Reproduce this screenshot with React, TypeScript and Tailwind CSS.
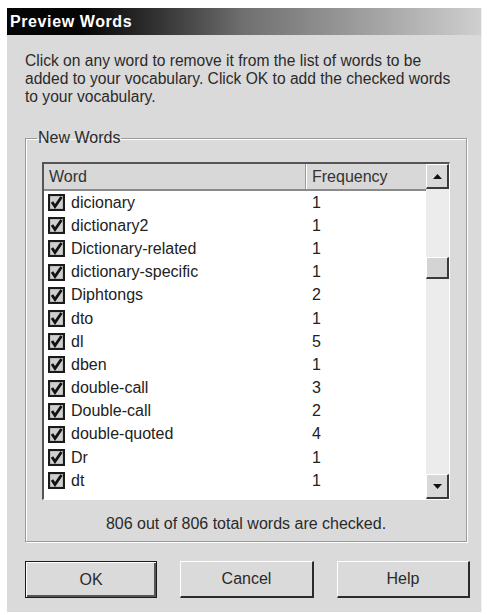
import React from "react";

const words: [string, number][] = [
  ["dicionary", 1],
  ["dictionary2", 1],
  ["Dictionary-related", 1],
  ["dictionary-specific", 1],
  ["Diphtongs", 2],
  ["dto", 1],
  ["dl", 5],
  ["dben", 1],
  ["double-call", 3],
  ["Double-call", 2],
  ["double-quoted", 4],
  ["Dr", 1],
  ["dt", 1],
];

function CheckBox() {
  return (
    <svg width="17" height="17" viewBox="0 0 17 17" className="shrink-0">
      <rect x="1" y="1" width="15" height="15" fill="#cfcfcf" stroke="#1a1a1a" strokeWidth="2.2" />
      <polyline points="4,8 7,12.5 13.5,3" fill="none" stroke="#111" strokeWidth="2.8" />
    </svg>
  );
}

function ArrowButton({ dir }: { dir: "up" | "down" }) {
  return (
    <div className="h-[25px] w-full bg-[#d8d8d8] border-t border-l border-t-white border-l-white border-b-2 border-r-2 border-b-[#3a3a3a] border-r-[#3a3a3a] flex items-center justify-center">
      <svg width="9" height="5" viewBox="0 0 9 5">
        {dir === "up" ? <polygon points="0,5 9,5 4.5,0" fill="#111" /> : <polygon points="0,0 9,0 4.5,5" fill="#111" />}
      </svg>
    </div>
  );
}

function DialogButton({ label, isDefault }: { label: string; isDefault?: boolean }) {
  return (
    <button
      className={`h-[37px] bg-[#dadada] text-[16px] text-[#2a2a2a] ${
        isDefault
          ? "border border-[#1a1a1a] shadow-[inset_1px_1px_0_#fff,inset_-2px_-2px_0_#555]"
          : "border-t border-l border-t-white border-l-white border-b-2 border-r-2 border-b-[#2a2a2a] border-r-[#2a2a2a]"
      }`}
    >
      {label}
    </button>
  );
}

export default function App() {
  return (
    <div className="w-[487px] h-[615px] bg-white pt-[8px] pl-[7px] font-['Liberation_Sans',Arial,sans-serif]">
      <div className="w-[475px] h-[604px] bg-[#dadada] border-r border-r-[#f2f2f2] flex flex-col">
        {/* Title bar */}
        <div className="h-[27px] flex items-center pl-[3px] bg-gradient-to-r from-[#050505] from-[15%] via-[#707070] via-[50%] to-[#cfcfcf]">
          <span className="text-white font-bold text-[16px] tracking-[0.6px]">Preview Words</span>
        </div>

        <div className="pl-[18px] pt-[17px]">
          <p className="whitespace-nowrap text-[15.6px] leading-[18px] text-[#2a2a2a]">
            Click on any word to remove it from the list of words to be
            <br />
            added to your vocabulary. Click OK to add the checked words
            <br />
            to your vocabulary.
          </p>

          {/* New Words group */}
          <fieldset className="mt-[24px] w-[442px] h-[412px] border border-[#9a9a9a] shadow-[inset_1px_1px_0_#fff,1px_1px_0_#fff]">
            <legend className="ml-[11px] px-[1px] text-[16px] text-[#2a2a2a] leading-[16px]">New Words</legend>

            <div className="px-[16px]">
              <div className="mt-[16px] h-[338px] flex border-t-2 border-l-2 border-t-[#555] border-l-[#555] border-b border-r border-b-white border-r-white bg-white">
                <div className="flex-1 flex flex-col">
                  <div className="h-[27px] flex bg-[#d8d8d8] text-[16px] text-[#333] border-b-2 border-b-[#8a8a8a]">
                    <div className="w-[262px] pl-[5px] flex items-center border-r border-r-[#9a9a9a] shadow-[1px_0_0_#fff]">Word</div>
                    <div className="flex-1 pl-[6px] flex items-center">Frequency</div>
                  </div>
                  <div className="flex-1">
                    {words.map(([w, f]) => (
                      <div key={w} className="h-[23.2px] flex items-center text-[16px] text-[#222]">
                        <div className="w-[262px] flex items-center gap-[6px] pl-[4px]">
                          <CheckBox />
                          <span>{w}</span>
                        </div>
                        <div className="pl-[6px]">{f}</div>
                      </div>
                    ))}
                  </div>
                </div>

                {/* Vertical scrollbar */}
                <div className="w-[23px] flex flex-col bg-[#ececec]">
                  <ArrowButton dir="up" />
                  <div className="flex-1 flex flex-col">
                    <div className="h-[68px]" />
                    <div className="h-[22px] bg-[#d4d4d4] border-t border-l border-t-white border-l-white border-b-2 border-r-2 border-b-[#3a3a3a] border-r-[#3a3a3a]" />
                  </div>
                  <ArrowButton dir="down" />
                </div>
              </div>

              <div className="mt-[12px] text-center text-[16px] text-[#2a2a2a]">806 out of 806 total words are checked.</div>
            </div>
          </fieldset>

          <div className="mt-[19px] w-[445px] flex gap-[23px]">
            <div className="w-[132px] shrink-0 flex flex-col"><DialogButton label="OK" isDefault /></div>
            <div className="w-[134px] shrink-0 flex flex-col"><DialogButton label="Cancel" /></div>
            <div className="w-[133px] shrink-0 flex flex-col"><DialogButton label="Help" /></div>
          </div>
        </div>
      </div>
    </div>
  );
}
